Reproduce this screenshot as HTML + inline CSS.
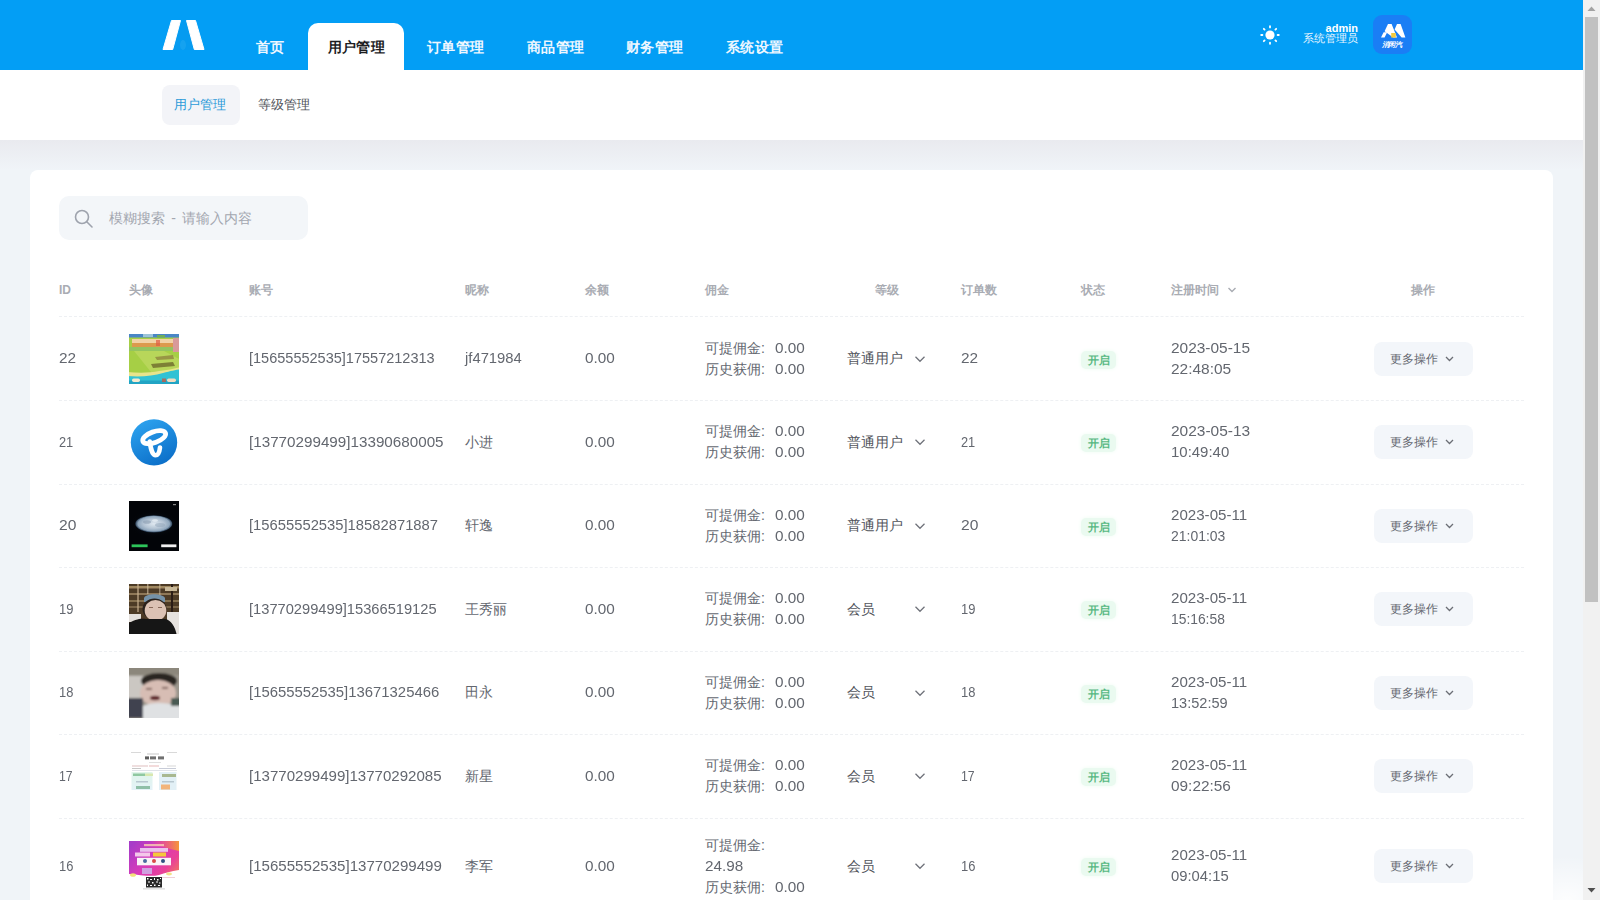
<!DOCTYPE html>
<html><head><meta charset="utf-8">
<style>
*{box-sizing:border-box;margin:0;padding:0}
html,body{width:1600px;height:900px;overflow:hidden}
body{position:relative;background:#f0f4f8;font-family:"Liberation Sans",sans-serif;color:#5b5f68}
.abs{position:absolute}
#hdr{position:absolute;left:0;top:0;width:1583px;height:70px;background:#039ef5}
.nav{position:absolute;top:39px;font-size:14px;font-weight:bold;color:#eef7ff;line-height:16px;white-space:nowrap;letter-spacing:.3px}
#tab{position:absolute;left:308px;top:23px;width:96px;height:47px;background:#fff;border-radius:10px 10px 0 0}
#tab span{position:absolute;left:20px;letter-spacing:.2px;top:16px;font-size:14px;font-weight:bold;color:#1d1d1f;line-height:16px;white-space:nowrap}
#sub{position:absolute;left:0;top:70px;width:1583px;height:70px;background:#fff}
#shadow{position:absolute;left:0;top:140px;width:1583px;height:30px;background:linear-gradient(#e9eaef,#f0f4f8)}
#card{position:absolute;left:30px;top:170px;width:1523px;height:760px;background:#fff;border-radius:8px}
#sb{position:absolute;left:1583px;top:0;width:17px;height:900px;background:#f1f1f1}
#thumb{position:absolute;left:2px;top:17px;width:13px;height:585px;background:#c1c1c1}
.th{position:absolute;top:283px;font-size:12px;font-weight:bold;color:#a9acb3;line-height:14px;white-space:nowrap}
.line{position:absolute;left:59px;width:1465px;height:0;border-top:1px dashed #eef0f3}
.td{position:absolute;font-size:14px;line-height:21px;color:#63676f;white-space:nowrap}
.cn{letter-spacing:0}
.dt{letter-spacing:.8px}
.co{display:inline-block;width:14px}
.num{letter-spacing:.55px}
.acc{letter-spacing:.26px}
.av{position:absolute;left:129px;width:50px;height:50px;overflow:hidden}
.lvl{position:absolute;left:847px;font-size:14px;line-height:21px;color:#52555c;white-space:nowrap}
.chev{position:absolute;left:914px}
.badge{position:absolute;left:1081px;width:35px;height:18px;background:#eafaf0;border-radius:5px;font-size:11px;font-weight:bold;color:#58b882;line-height:18px;text-align:center;box-shadow:0 0 4px #effcf3}
.btn{position:absolute;left:1374px;width:99px;height:34px;background:#f3f6fa;border-radius:8px}
.btn span{position:absolute;left:16px;top:10px;font-size:12px;line-height:14px;color:#63676f;white-space:nowrap}
.btn svg{position:absolute;left:71px;top:14px}
</style></head><body>

<div id="hdr">
  <svg class="abs" style="left:160px;top:17px" width="48" height="36" viewBox="0 0 48 36">
    <defs><linearGradient id="lg" x1="0" y1="0" x2="0" y2="1"><stop offset="0" stop-color="#039ef5"/><stop offset="1" stop-color="#3aa6ee"/></linearGradient></defs>
    <path d="M22.5 4 L26 4 L34 33 L13 33 Z" fill="#0c95e6" opacity=".3"/><ellipse cx="23" cy="28" rx="3" ry="5" fill="#35aef2" opacity=".35"/>
    <path d="M11.5 3.5 L20.5 3.5 L12.7 32.5 L3 32.5 Z" fill="#fff" stroke="#fff" stroke-width="1" stroke-linejoin="round"/>
    <path d="M26.5 3.5 L35.5 3.5 L44 32.5 L34.3 32.5 Z" fill="#fff" stroke="#fff" stroke-width="1" stroke-linejoin="round"/>
  </svg>
  <div class="nav" style="left:256px">首页</div>
  <div id="tab"><span>用户管理</span></div>
  <div class="nav" style="left:427px">订单管理</div>
  <div class="nav" style="left:527px">商品管理</div>
  <div class="nav" style="left:626px">财务管理</div>
  <div class="nav" style="left:726px">系统设置</div>
  <svg class="abs" style="left:1260px;top:25px" width="20" height="20" viewBox="0 0 20 20">
    <circle cx="10" cy="10" r="4.6" fill="#fff"/>
    <g stroke="#fff" stroke-width="1.8" stroke-linecap="round">
      <line x1="10" y1="1.2" x2="10" y2="2.4"/><line x1="10" y1="17.6" x2="10" y2="18.8"/>
      <line x1="1.2" y1="10" x2="2.4" y2="10"/><line x1="17.6" y1="10" x2="18.8" y2="10"/>
      <line x1="3.8" y1="3.8" x2="4.6" y2="4.6"/><line x1="15.4" y1="15.4" x2="16.2" y2="16.2"/>
      <line x1="3.8" y1="16.2" x2="4.6" y2="15.4"/><line x1="15.4" y1="4.6" x2="16.2" y2="3.8"/>
    </g>
  </svg>
  <div class="abs" style="right:225px;top:22px;font-size:11px;font-weight:bold;line-height:12px;color:#fff;text-align:right">admin</div>
  <div class="abs" style="right:225px;top:32px;font-size:11px;line-height:12px;color:#e8f5ff;text-align:right">系统管理员</div>
  <div class="abs" style="left:1373px;top:15px;width:39px;height:39px;border-radius:9px;background:#1a7ef5;overflow:hidden">
    <svg class="abs" style="left:0;top:0" width="39" height="39" viewBox="0 0 39 39">
      <g fill="#fff">
      <path d="M8 22.6 L10.6 17.2 L14.2 17.2 L11.6 22.6 Z"/>
      <path d="M11.6 16.2 L15 9 L18.6 9 L24 22.6 L20.2 22.6 Z"/>
      <path d="M21.6 14.5 L24 9 L27.6 9 L32.4 22.6 L28.6 22.6 Z"/>
      </g>
      <rect x="18.2" y="18" width="4.6" height="4.6" fill="#f3c93c"/>
      <text x="18.5" y="31.6" font-size="7.2" font-weight="bold" fill="#fff" text-anchor="middle" font-style="italic" letter-spacing="-0.4">消闲汽</text>
    </svg>
  </div>
</div>
<div id="sub">
  <div class="abs" style="left:162px;top:15px;width:78px;height:40px;background:#f3f4f8;border-radius:8px"></div>
  <div class="abs" style="left:174px;top:27px;font-size:13px;line-height:15px;color:#2b9ad8">用户管理</div>
  <div class="abs" style="left:258px;top:27px;font-size:13px;line-height:15px;color:#50535a">等级管理</div>
</div>
<div id="shadow"></div>


<div id="card"></div>
<div class="abs" style="left:59px;top:196px;width:249px;height:44px;background:#f3f6f9;border-radius:10px"></div>
<svg class="abs" style="left:72px;top:207px" width="24" height="24" viewBox="0 0 24 24">
  <circle cx="10" cy="10" r="6.5" fill="none" stroke="#9ea3ad" stroke-width="1.6"/>
  <line x1="15" y1="15" x2="20" y2="20" stroke="#9ea3ad" stroke-width="1.6" stroke-linecap="round"/>
</svg>
<div class="abs" style="left:109px;top:210px;font-size:14px;line-height:16px;color:#a3a7b0;white-space:nowrap">模糊搜索<span style="display:inline-block;width:17px;text-align:center">-</span>请输入内容</div>
<div class="th" style="left:59px">ID</div>
<div class="th" style="left:129px">头像</div>
<div class="th" style="left:249px">账号</div>
<div class="th" style="left:465px">昵称</div>
<div class="th" style="left:585px">余额</div>
<div class="th" style="left:705px">佣金</div>
<div class="th" style="left:875px">等级</div>
<div class="th" style="left:961px">订单数</div>
<div class="th" style="left:1081px">状态</div>
<div class="th" style="left:1171px">注册时间</div>
<svg class="abs" style="left:1227px;top:286px" width="10" height="8" viewBox="0 0 10 8"><path d="M1.5 2 L5 5.5 L8.5 2" fill="none" stroke="#a9acb3" stroke-width="1.4"/></svg>
<div class="th" style="left:1411px">操作</div>
<div class="line" style="top:316px"></div>

<div class="td" style="left:59px;top:348.25px"><span style="display:inline-block;transform:scaleX(1.0964);transform-origin:0 0">22</span></div>
<svg class="av" style="top:333.75px" width="50" height="50" viewBox="0 0 50 50">
<defs><filter id="b1"><feGaussianBlur stdDeviation="0.7"/></filter></defs>
<rect width="50" height="50" fill="#a6cf45"/>
<g filter="url(#b1)">
<rect x="-2" y="-2" width="54" height="5.5" fill="#4a86c6"/>
<rect x="14" y="0" width="10" height="3" fill="#9cc4d8"/>
<rect x="28" y="1" width="8" height="2.5" fill="#6fae58"/>
<rect x="3" y="5" width="42" height="4.5" fill="#f2d2a6"/>
<rect x="3" y="9" width="42" height="4" fill="#dc9a4e"/>
<rect x="27" y="6" width="4" height="6" fill="#e05a40" opacity=".7"/>
<rect x="-2" y="13" width="54" height="4" fill="#94c460"/>
<rect x="44" y="4" width="8" height="14" fill="#d89a9a"/>
<path d="M5 17 L35 17 L52 26 L52 36 L22 38 Z" fill="#b8d65a"/>
<path d="M22 30 L44 28 L46 32 L24 34 Z" fill="#6e6a2c" opacity=".8"/>
<path d="M26 23 L44 21 L45 25 L28 26 Z" fill="#8a7a3a" opacity=".7"/>
<path d="M-2 38 C10 39 20 39 30 37 C38 36 44 35 52 33 L52 52 L-2 52 Z" fill="#e8e48c"/>
<path d="M-2 42 C12 43 24 42 34 39 C42 37 46 36 52 35 L52 52 L-2 52 Z" fill="#30c2d4"/>
<rect x="-2" y="46.5" width="54" height="6" fill="#24a4c4"/>
<rect x="3" y="44.5" width="8" height="3.5" rx="1.7" fill="#f4ead0"/>
<rect x="38" y="44.5" width="9" height="3.5" rx="1.7" fill="#f2dcc0"/>
<rect x="33" y="44.5" width="4" height="3.5" fill="#c05a48" opacity=".8"/>
</g></svg>
<div class="td" style="left:249px;top:348.25px"><span style="display:inline-block;transform:scaleX(1.0366);transform-origin:0 0">[15655552535]17557212313</span></div>
<div class="td" style="left:465px;top:348.25px"><span style="display:inline-block;transform:scaleX(1.0570);transform-origin:0 0">jf471984</span></div>
<div class="td" style="left:585px;top:348.25px"><span style="display:inline-block;transform:scaleX(1.0941);transform-origin:0 0">0.00</span></div>
<div class="td" style="left:705px;top:337.75px">可提佣金<span class=co>:</span><span style="display:inline-block;transform:scaleX(1.0941);transform-origin:0 0">0.00</span><br>历史获佣<span class=co>:</span><span style="display:inline-block;transform:scaleX(1.0941);transform-origin:0 0">0.00</span></div>
<div class="lvl" style="top:348.25px">普通用户</div>
<svg class="chev" style="top:354.75px" width="12" height="8" viewBox="0 0 12 8"><path d="M1.5 1.8 L6 6.3 L10.5 1.8" fill="none" stroke="#6f727a" stroke-width="1.25"/></svg>
<div class="td" style="left:961px;top:348.25px"><span style="display:inline-block;transform:scaleX(1.0964);transform-origin:0 0">22</span></div>
<div class="badge" style="top:350.75px">开启</div>
<div class="td" style="left:1171px;top:337.75px"><span style="display:inline-block;transform:scaleX(1.1033);transform-origin:0 0">2023-05-15</span><br><span style="display:inline-block;transform:scaleX(1.1047);transform-origin:0 0">22:48:05</span></div>
<div class="btn" style="top:341.75px"><span>更多操作</span><svg width="9" height="6" viewBox="0 0 9 6"><path d="M1 1 L4.5 4.5 L8 1" fill="none" stroke="#6b6e75" stroke-width="1.3"/></svg></div>
<div class="line" style="top:400.0px"></div>
<div class="td" style="left:59px;top:431.75px"><span style="display:inline-block;transform:scaleX(0.9137);transform-origin:0 0">21</span></div>
<svg class="av" style="top:417.25px" width="50" height="50" viewBox="0 0 50 50">
<defs><linearGradient id="tg" x1="0.2" y1="0" x2="0.7" y2="1"><stop offset="0" stop-color="#2da3ef"/><stop offset="1" stop-color="#0b6ec8"/></linearGradient></defs>
<circle cx="25" cy="25.4" r="23.2" fill="url(#tg)"/>
<g fill="none" stroke="#fff" stroke-linecap="round">
<ellipse cx="25.2" cy="20.2" rx="12" ry="5.4" transform="rotate(-20 25.2 20.2)" stroke-width="4.8"/>
<path d="M20.8 24.5 C21.5 31 23.5 38.3 26.5 38.3 C29.3 38.3 30.6 34 31 30.5" stroke-width="4.6"/>
</g></svg>
<div class="td" style="left:249px;top:431.75px"><span style="display:inline-block;transform:scaleX(1.0864);transform-origin:0 0">[13770299499]13390680005</span></div>
<div class="td" style="left:465px;top:431.75px">小进</div>
<div class="td" style="left:585px;top:431.75px"><span style="display:inline-block;transform:scaleX(1.0941);transform-origin:0 0">0.00</span></div>
<div class="td" style="left:705px;top:421.25px">可提佣金<span class=co>:</span><span style="display:inline-block;transform:scaleX(1.0941);transform-origin:0 0">0.00</span><br>历史获佣<span class=co>:</span><span style="display:inline-block;transform:scaleX(1.0941);transform-origin:0 0">0.00</span></div>
<div class="lvl" style="top:431.75px">普通用户</div>
<svg class="chev" style="top:438.25px" width="12" height="8" viewBox="0 0 12 8"><path d="M1.5 1.8 L6 6.3 L10.5 1.8" fill="none" stroke="#6f727a" stroke-width="1.25"/></svg>
<div class="td" style="left:961px;top:431.75px"><span style="display:inline-block;transform:scaleX(0.9137);transform-origin:0 0">21</span></div>
<div class="badge" style="top:434.25px">开启</div>
<div class="td" style="left:1171px;top:421.25px"><span style="display:inline-block;transform:scaleX(1.1050);transform-origin:0 0">2023-05-13</span><br><span style="display:inline-block;transform:scaleX(1.0683);transform-origin:0 0">10:49:40</span></div>
<div class="btn" style="top:425.25px"><span>更多操作</span><svg width="9" height="6" viewBox="0 0 9 6"><path d="M1 1 L4.5 4.5 L8 1" fill="none" stroke="#6b6e75" stroke-width="1.3"/></svg></div>
<div class="line" style="top:483.5px"></div>
<div class="td" style="left:59px;top:515.25px"><span style="display:inline-block;transform:scaleX(1.1155);transform-origin:0 0">20</span></div>
<svg class="av" style="top:500.75px" width="50" height="50" viewBox="0 0 50 50">
<defs><radialGradient id="mg" cx="0.5" cy="0.5" r="0.5"><stop offset="0" stop-color="#dfe8f0"/><stop offset="0.55" stop-color="#b4c4d4"/><stop offset="0.85" stop-color="#8fa6bc"/><stop offset="1" stop-color="#2a4058"/></radialGradient>
<radialGradient id="glow" cx="0.5" cy="0.5" r="0.5"><stop offset="0" stop-color="#14243a"/><stop offset="1" stop-color="#020408" stop-opacity="0"/></radialGradient>
<filter id="b3"><feGaussianBlur stdDeviation="0.5"/></filter></defs>
<rect width="50" height="50" fill="#020408"/>
<ellipse cx="25" cy="23" rx="25" ry="14" fill="url(#glow)"/>
<g filter="url(#b3)">
<ellipse cx="24.8" cy="22.8" rx="18.5" ry="8.6" fill="url(#mg)"/>
<ellipse cx="18" cy="21" rx="4" ry="1.8" fill="#8a9cb0" opacity=".6"/>
<ellipse cx="31" cy="24" rx="5" ry="2" fill="#90a4b8" opacity=".5"/>
<ellipse cx="26" cy="19.5" rx="3" ry="1.2" fill="#f4f8fc" opacity=".6"/>
</g>
<rect x="2.6" y="43.4" width="16" height="2.8" fill="#2dc45a"/>
<rect x="32.2" y="43.4" width="15.2" height="2.8" fill="#f0f0f0"/>
<rect x="44" y="3" width="3" height="1.2" fill="#888"/>
</svg>
<div class="td" style="left:249px;top:515.25px"><span style="display:inline-block;transform:scaleX(1.0556);transform-origin:0 0">[15655552535]18582871887</span></div>
<div class="td" style="left:465px;top:515.25px">轩逸</div>
<div class="td" style="left:585px;top:515.25px"><span style="display:inline-block;transform:scaleX(1.0941);transform-origin:0 0">0.00</span></div>
<div class="td" style="left:705px;top:504.75px">可提佣金<span class=co>:</span><span style="display:inline-block;transform:scaleX(1.0941);transform-origin:0 0">0.00</span><br>历史获佣<span class=co>:</span><span style="display:inline-block;transform:scaleX(1.0941);transform-origin:0 0">0.00</span></div>
<div class="lvl" style="top:515.25px">普通用户</div>
<svg class="chev" style="top:521.75px" width="12" height="8" viewBox="0 0 12 8"><path d="M1.5 1.8 L6 6.3 L10.5 1.8" fill="none" stroke="#6f727a" stroke-width="1.25"/></svg>
<div class="td" style="left:961px;top:515.25px"><span style="display:inline-block;transform:scaleX(1.1155);transform-origin:0 0">20</span></div>
<div class="badge" style="top:517.75px">开启</div>
<div class="td" style="left:1171px;top:504.75px"><span style="display:inline-block;transform:scaleX(1.0793);transform-origin:0 0">2023-05-11</span><br><span style="display:inline-block;transform:scaleX(0.9963);transform-origin:0 0">21:01:03</span></div>
<div class="btn" style="top:508.75px"><span>更多操作</span><svg width="9" height="6" viewBox="0 0 9 6"><path d="M1 1 L4.5 4.5 L8 1" fill="none" stroke="#6b6e75" stroke-width="1.3"/></svg></div>
<div class="line" style="top:567.0px"></div>
<div class="td" style="left:59px;top:598.75px"><span style="display:inline-block;transform:scaleX(0.9237);transform-origin:0 0">19</span></div>
<svg class="av" style="top:584.25px" width="50" height="50" viewBox="0 0 50 50">
<defs><filter id="b4"><feGaussianBlur stdDeviation="0.7"/></filter></defs>
<g filter="url(#b4)">
<rect x="-2" y="-2" width="54" height="54" fill="#4e3a28"/>
<rect x="-2" y="2" width="54" height="2.5" fill="#a08860"/>
<rect x="-2" y="9" width="54" height="2" fill="#8f7858"/>
<rect x="-2" y="16" width="54" height="2" fill="#857050"/>
<rect x="-2" y="22" width="54" height="2" fill="#7a6548"/>
<rect x="8" y="0" width="2" height="28" fill="#c8b090" opacity=".6"/>
<rect x="18" y="0" width="1.5" height="10" fill="#d8c8a8" opacity=".6"/>
<rect x="30" y="0" width="1.5" height="12" fill="#d8c8a8" opacity=".5"/>
<rect x="42" y="0" width="2" height="28" fill="#2a1e14"/>
<rect x="36" y="3" width="12" height="4" fill="#c8b898"/>
<rect x="-2" y="30" width="14" height="8" fill="#e4e0dc"/>
<rect x="38" y="28" width="14" height="24" fill="#e6e2de"/>
<path d="M15 14 C17 9 33 9 36 14 L36 18 L15 18 Z" fill="#7592a8"/>
<ellipse cx="25.5" cy="25" rx="12" ry="10.5" fill="#2a211b"/>
<ellipse cx="26.5" cy="26.5" rx="10.8" ry="10.5" fill="#dcc2b4"/>
<rect x="20" y="23" width="4" height="1" fill="#8a6a5a"/>
<rect x="29" y="23" width="4" height="1" fill="#8a6a5a"/>
<path d="M-2 52 L-2 40 C6 35 12 34 17 35 L36 35 C42 36 46 42 48 52 Z" fill="#151312"/>
</g></svg>
<div class="td" style="left:249px;top:598.75px"><span style="display:inline-block;transform:scaleX(1.0474);transform-origin:0 0">[13770299499]15366519125</span></div>
<div class="td" style="left:465px;top:598.75px">王秀丽</div>
<div class="td" style="left:585px;top:598.75px"><span style="display:inline-block;transform:scaleX(1.0941);transform-origin:0 0">0.00</span></div>
<div class="td" style="left:705px;top:588.25px">可提佣金<span class=co>:</span><span style="display:inline-block;transform:scaleX(1.0941);transform-origin:0 0">0.00</span><br>历史获佣<span class=co>:</span><span style="display:inline-block;transform:scaleX(1.0941);transform-origin:0 0">0.00</span></div>
<div class="lvl" style="top:598.75px">会员</div>
<svg class="chev" style="top:605.25px" width="12" height="8" viewBox="0 0 12 8"><path d="M1.5 1.8 L6 6.3 L10.5 1.8" fill="none" stroke="#6f727a" stroke-width="1.25"/></svg>
<div class="td" style="left:961px;top:598.75px"><span style="display:inline-block;transform:scaleX(0.9237);transform-origin:0 0">19</span></div>
<div class="badge" style="top:601.25px">开启</div>
<div class="td" style="left:1171px;top:588.25px"><span style="display:inline-block;transform:scaleX(1.0793);transform-origin:0 0">2023-05-11</span><br><span style="display:inline-block;transform:scaleX(0.9880);transform-origin:0 0">15:16:58</span></div>
<div class="btn" style="top:592.25px"><span>更多操作</span><svg width="9" height="6" viewBox="0 0 9 6"><path d="M1 1 L4.5 4.5 L8 1" fill="none" stroke="#6b6e75" stroke-width="1.3"/></svg></div>
<div class="line" style="top:650.5px"></div>
<div class="td" style="left:59px;top:682.25px"><span style="display:inline-block;transform:scaleX(0.9217);transform-origin:0 0">18</span></div>
<svg class="av" style="top:667.75px" width="50" height="50" viewBox="0 0 50 50">
<defs><filter id="b5"><feGaussianBlur stdDeviation="1"/></filter></defs>
<g filter="url(#b5)">
<rect x="-2" y="-2" width="54" height="54" fill="#9b968d"/>
<rect x="-2" y="-2" width="54" height="9" fill="#8c877c"/>
<rect x="-2" y="8" width="16" height="24" fill="#cbc7c2"/>
<ellipse cx="30" cy="13" rx="18" ry="8" fill="#2b2623"/>
<ellipse cx="29" cy="25" rx="18" ry="13" fill="#d7bdb4"/>
<rect x="17" y="20" width="6" height="1.6" fill="#6a4a44"/>
<rect x="33" y="19" width="6" height="1.6" fill="#6a4a44"/>
<ellipse cx="26" cy="30" rx="5" ry="2.2" fill="#5b1d24"/>
<rect x="-2" y="30" width="16" height="20" fill="#3f4250"/>
<path d="M14 52 L14 38 C22 34 36 34 52 38 L52 52 Z" fill="#dfe1e3"/>
<rect x="42" y="30" width="10" height="8" fill="#4a5a52"/>
</g></svg>
<div class="td" style="left:249px;top:682.25px"><span style="display:inline-block;transform:scaleX(1.0622);transform-origin:0 0">[15655552535]13671325466</span></div>
<div class="td" style="left:465px;top:682.25px">田永</div>
<div class="td" style="left:585px;top:682.25px"><span style="display:inline-block;transform:scaleX(1.0941);transform-origin:0 0">0.00</span></div>
<div class="td" style="left:705px;top:671.75px">可提佣金<span class=co>:</span><span style="display:inline-block;transform:scaleX(1.0941);transform-origin:0 0">0.00</span><br>历史获佣<span class=co>:</span><span style="display:inline-block;transform:scaleX(1.0941);transform-origin:0 0">0.00</span></div>
<div class="lvl" style="top:682.25px">会员</div>
<svg class="chev" style="top:688.75px" width="12" height="8" viewBox="0 0 12 8"><path d="M1.5 1.8 L6 6.3 L10.5 1.8" fill="none" stroke="#6f727a" stroke-width="1.25"/></svg>
<div class="td" style="left:961px;top:682.25px"><span style="display:inline-block;transform:scaleX(0.9217);transform-origin:0 0">18</span></div>
<div class="badge" style="top:684.75px">开启</div>
<div class="td" style="left:1171px;top:671.75px"><span style="display:inline-block;transform:scaleX(1.0793);transform-origin:0 0">2023-05-11</span><br><span style="display:inline-block;transform:scaleX(1.0399);transform-origin:0 0">13:52:59</span></div>
<div class="btn" style="top:675.75px"><span>更多操作</span><svg width="9" height="6" viewBox="0 0 9 6"><path d="M1 1 L4.5 4.5 L8 1" fill="none" stroke="#6b6e75" stroke-width="1.3"/></svg></div>
<div class="line" style="top:734.0px"></div>
<div class="td" style="left:59px;top:765.75px"><span style="display:inline-block;transform:scaleX(0.8745);transform-origin:0 0">17</span></div>
<svg class="av" style="top:751.25px" width="50" height="50" viewBox="0 0 50 50">
<defs><filter id="b6"><feGaussianBlur stdDeviation="0.6"/></filter>
<linearGradient id="g6a" x1="0" y1="0" x2="0" y2="1"><stop offset="0" stop-color="#dff5ea"/><stop offset="1" stop-color="#e4f2f8"/></linearGradient></defs>
<rect width="50" height="50" fill="#ffffff"/>
<g filter="url(#b6)">
<rect x="2" y="1" width="10" height=".8" fill="#d0d0d0"/>
<rect x="38" y="1" width="10" height=".8" fill="#d0d0d0"/>
<rect x="18" y="2.5" width="12" height="1" fill="#c8c8c8"/>
<rect x="16" y="5.4" width="4" height="3" fill="#333" opacity=".8"/>
<rect x="21" y="5.4" width="6" height="3" fill="#333" opacity=".7"/>
<rect x="29" y="5.4" width="6" height="3" fill="#333" opacity=".7"/>
<rect x="20" y="11" width="12" height=".8" fill="#d8d8d8"/>
<rect x="3" y="14.5" width="16" height="1" fill="#e0c0c0"/>
<rect x="20" y="14.5" width="10" height="1" fill="#e8b8b8"/>
<rect x="38" y="14.5" width="9" height="1" fill="#d8d8d8"/>
<rect x="3" y="17" width="9" height="1" fill="#c8c8c8"/>
<rect x="30" y="17" width="17" height="1" fill="#c8ccd8"/>
<rect x="3" y="19" width="45" height=".8" fill="#d8dce4"/>
<rect x="2.5" y="21" width="21" height="18" fill="url(#g6a)"/><rect x="30" y="21" width="17.5" height="18" fill="#e2f0f6"/>
<rect x="4" y="22.5" width="12" height="2.5" fill="#8fc8a0"/>
<rect x="16" y="22.5" width="8" height="2.5" fill="#d8e8b0"/>
<rect x="33" y="23" width="14" height="3" fill="#a8b890"/>
<rect x="7" y="30" width="12" height="1.5" fill="#b8c8d0"/>
<rect x="33" y="30" width="12" height="1.5" fill="#b8c8d0"/>
<rect x="7" y="35" width="14" height="3" fill="#8fbfa8"/>
<rect x="32" y="33.5" width="9" height="5" fill="#f2b47a"/>
</g></svg>
<div class="td" style="left:249px;top:765.75px"><span style="display:inline-block;transform:scaleX(1.0752);transform-origin:0 0">[13770299499]13770292085</span></div>
<div class="td" style="left:465px;top:765.75px">新星</div>
<div class="td" style="left:585px;top:765.75px"><span style="display:inline-block;transform:scaleX(1.0941);transform-origin:0 0">0.00</span></div>
<div class="td" style="left:705px;top:755.25px">可提佣金<span class=co>:</span><span style="display:inline-block;transform:scaleX(1.0941);transform-origin:0 0">0.00</span><br>历史获佣<span class=co>:</span><span style="display:inline-block;transform:scaleX(1.0941);transform-origin:0 0">0.00</span></div>
<div class="lvl" style="top:765.75px">会员</div>
<svg class="chev" style="top:772.25px" width="12" height="8" viewBox="0 0 12 8"><path d="M1.5 1.8 L6 6.3 L10.5 1.8" fill="none" stroke="#6f727a" stroke-width="1.25"/></svg>
<div class="td" style="left:961px;top:765.75px"><span style="display:inline-block;transform:scaleX(0.8745);transform-origin:0 0">17</span></div>
<div class="badge" style="top:768.25px">开启</div>
<div class="td" style="left:1171px;top:755.25px"><span style="display:inline-block;transform:scaleX(1.0793);transform-origin:0 0">2023-05-11</span><br><span style="display:inline-block;transform:scaleX(1.0987);transform-origin:0 0">09:22:56</span></div>
<div class="btn" style="top:759.25px"><span>更多操作</span><svg width="9" height="6" viewBox="0 0 9 6"><path d="M1 1 L4.5 4.5 L8 1" fill="none" stroke="#6b6e75" stroke-width="1.3"/></svg></div>
<div class="line" style="top:817.5px"></div>
<div class="td" style="left:59px;top:855.75px"><span style="display:inline-block;transform:scaleX(0.9237);transform-origin:0 0">16</span></div>
<svg class="av" style="top:841.25px" width="50" height="50" viewBox="0 0 50 50">
<defs><linearGradient id="pg" x1="0" y1="0.2" x2="1" y2="0.8"><stop offset="0" stop-color="#a83ac8"/><stop offset="0.45" stop-color="#d83ab8"/><stop offset="0.8" stop-color="#e8409a"/><stop offset="1" stop-color="#f06a6a"/></linearGradient>
<linearGradient id="pg2" x1="0" y1="0" x2="1" y2="0"><stop offset="0" stop-color="#f04a8a" stop-opacity="0"/><stop offset="1" stop-color="#f5983a"/></linearGradient>
<filter id="b7"><feGaussianBlur stdDeviation="0.45"/></filter></defs>
<rect width="50" height="50" fill="#fff"/>
<g filter="url(#b7)">
<path d="M0 0 L50 0 L50 29 C42 30 36 32 30 34 C22 36 12 34 0 33 Z" fill="url(#pg)"/>
<path d="M20 0 L50 0 L50 10 C40 8 30 5 20 0 Z" fill="url(#pg2)"/>
<rect x="15" y="3" width="20" height="2.2" fill="#f8c8b0" opacity=".85"/>
<rect x="11" y="7" width="28" height="3.8" fill="#f0d8f4" opacity=".85"/>
<rect x="6" y="11.5" width="15" height="4" fill="#f8d8ee" opacity=".9"/>
<rect x="24" y="11.5" width="13" height="4" fill="#f5c83a"/>
<rect x="8" y="16.8" width="34" height="7.5" fill="#faf4f8"/>
<circle cx="16" cy="20" r="2" fill="#4a6aa0"/>
<circle cx="25" cy="20" r="2" fill="#d84848"/>
<circle cx="34" cy="20" r="2" fill="#2f5080"/>
<ellipse cx="4" cy="34" rx="3" ry="1.8" fill="#f2e27a"/>
<ellipse cx="40" cy="33" rx="3" ry="1.4" fill="#f2e28a"/>
<rect x="13" y="27" width="10" height="6" fill="#d0a0e0"/>
<rect x="24" y="36" width="22" height="1" fill="#f0d0d8"/>
<rect x="14" y="47.5" width="22" height=".8" fill="#c8c8c8"/>
</g>
<rect x="17" y="36" width="16" height="10.5" fill="#2a2a2a"/>
<g fill="#fff"><rect x="18" y="37" width="1.5" height="1.5"/><rect x="21" y="38" width="2" height="1"/><rect x="25" y="37" width="1" height="2"/><rect x="28" y="38" width="1.5" height="1.5"/><rect x="31" y="37" width="1" height="1"/><rect x="19" y="40.5" width="2" height="1"/><rect x="23" y="41" width="1.5" height="1.5"/><rect x="27" y="40.5" width="2" height="1"/><rect x="30" y="41.5" width="1.5" height="1"/><rect x="18" y="43.5" width="1" height="1.5"/><rect x="21" y="44" width="2" height="1"/><rect x="25" y="43.5" width="1.5" height="1.5"/><rect x="29" y="44" width="2" height="1"/></g>
</svg>
<div class="td" style="left:249px;top:855.75px"><span style="display:inline-block;transform:scaleX(1.0771);transform-origin:0 0">[15655552535]13770299499</span></div>
<div class="td" style="left:465px;top:855.75px">李军</div>
<div class="td" style="left:585px;top:855.75px"><span style="display:inline-block;transform:scaleX(1.0941);transform-origin:0 0">0.00</span></div>
<div class="td" style="left:705px;top:834.75px">可提佣金<span class=co>:</span><br><span style="display:inline-block;transform:scaleX(1.0901);transform-origin:0 0">24.98</span><br>历史获佣<span class=co>:</span><span style="display:inline-block;transform:scaleX(1.0941);transform-origin:0 0">0.00</span></div>
<div class="lvl" style="top:855.75px">会员</div>
<svg class="chev" style="top:862.25px" width="12" height="8" viewBox="0 0 12 8"><path d="M1.5 1.8 L6 6.3 L10.5 1.8" fill="none" stroke="#6f727a" stroke-width="1.25"/></svg>
<div class="td" style="left:961px;top:855.75px"><span style="display:inline-block;transform:scaleX(0.9237);transform-origin:0 0">16</span></div>
<div class="badge" style="top:858.25px">开启</div>
<div class="td" style="left:1171px;top:845.25px"><span style="display:inline-block;transform:scaleX(1.0793);transform-origin:0 0">2023-05-11</span><br><span style="display:inline-block;transform:scaleX(1.0585);transform-origin:0 0">09:04:15</span></div>
<div class="btn" style="top:849.25px"><span>更多操作</span><svg width="9" height="6" viewBox="0 0 9 6"><path d="M1 1 L4.5 4.5 L8 1" fill="none" stroke="#6b6e75" stroke-width="1.3"/></svg></div>
<div class="abs" style="left:1500px;top:855px;width:95px;height:50px;background:radial-gradient(ellipse at 70% 90%,rgba(255,255,255,.85),rgba(255,255,255,0) 70%)"></div>

<div id="sb"><div id="thumb"></div>
<svg class="abs" style="left:3px;top:5px" width="11" height="7" viewBox="0 0 11 7"><path d="M1.5 6 L5.5 1.5 L9.5 6 Z" fill="#a3a3a3"/></svg>
<svg class="abs" style="left:3px;top:887px" width="11" height="7" viewBox="0 0 11 7"><path d="M1.5 1 L5.5 5.5 L9.5 1 Z" fill="#505050"/></svg>
</div>

</body></html>
